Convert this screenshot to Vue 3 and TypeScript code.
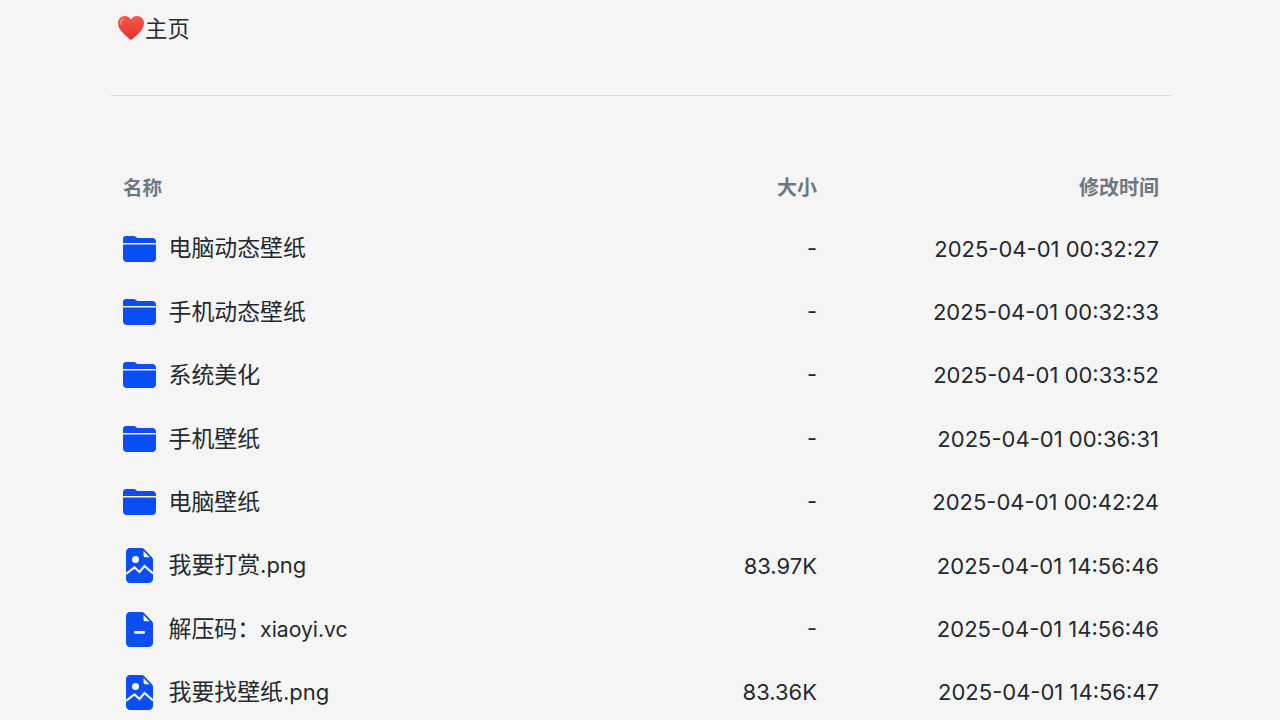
<script setup lang="ts">
interface Row {
  name: string
  ext?: string
  size: string
  time: string
  type: 'folder' | 'image' | 'file'
}

const rows: Row[] = [
  { name: '电脑动态壁纸', size: '-', time: '2025-04-01 00:32:27', type: 'folder' },
  { name: '手机动态壁纸', size: '-', time: '2025-04-01 00:32:33', type: 'folder' },
  { name: '系统美化', size: '-', time: '2025-04-01 00:33:52', type: 'folder' },
  { name: '手机壁纸', size: '-', time: '2025-04-01 00:36:31', type: 'folder' },
  { name: '电脑壁纸', size: '-', time: '2025-04-01 00:42:24', type: 'folder' },
  { name: '我要打赏', ext: '.png', size: '83.97K', time: '2025-04-01 14:56:46', type: 'image' },
  { name: '解压码：', ext: 'xiaoyi.vc', size: '-', time: '2025-04-01 14:56:46', type: 'file' },
  { name: '我要找壁纸', ext: '.png', size: '83.36K', time: '2025-04-01 14:56:47', type: 'image' }
]
</script>

<template>
  <div class="page">
    <div class="crumb">
      <svg class="heart" viewBox="0 0 28 26" width="28" height="26">
        <defs>
          <linearGradient id="heartFill" x1="0" y1="0" x2="0" y2="1">
            <stop offset="0" stop-color="#f4594c" />
            <stop offset="1" stop-color="#e5302a" />
          </linearGradient>
        </defs>
        <path d="M14 25C8 20 1 15 1 8.200 1 4 4.200 1 8 1c2.600 0 4.800 1.300 6 3.500C15.200 2.300 17.400 1 20 1c3.800 0 7 3 7 7.200C27 15 20 20 14 25z" fill="url(#heartFill)" />
        <path d="M6 4.500C4.300 5.300 3.400 7 3.600 9" fill="none" stroke="#f98a80" stroke-width="1.600" stroke-linecap="round" />
      </svg>
      <span class="crumb-text">主页</span>
    </div>
    <div class="divider"></div>
    <div class="table">
      <div class="row head">
        <div>名称</div>
        <div class="right">大小</div>
        <div class="right">修改时间</div>
      </div>
      <div v-for="row in rows" :key="row.name" class="row item">
        <div class="name">
          <span class="icon">
            <svg v-if="row.type === 'folder'" viewBox="0 0 33 26" width="33" height="26">
              <path d="M0 7V3C0 1.300 1.300 0 3 0h7.800c.8 0 1.600.3 2.200.9L14.200 2H29.500C31.500 2 33 3.600 33 5.500V7H0z" fill="#0c4ef5" />
              <path d="M0 8.500h33V22.500C33 24.400 31.400 26 29.500 26H3.500C1.600 26 0 24.400 0 22.500z" fill="#0c4ef5" />
            </svg>
            <svg v-else-if="row.type === 'image'" viewBox="0 0 27 35" width="27" height="35">
              <path d="M4 0h11.500c1 0 2 .4 2.800 1.200l7.500 7.800c.8.800 1.200 1.800 1.200 2.800V31c0 2.200-1.800 4-4 4H4c-2.200 0-4-1.800-4-4V4C0 1.800 1.800 0 4 0z" fill="#0c4ef5" />
              <path d="M17.500 3v4.500c0 1 .8 1.800 1.800 1.800h4.300z" fill="#f5f5f5" />
              <circle cx="9.500" cy="11.500" r="3.500" fill="#f5f5f5" />
              <path d="M0 26 8.500 19.500l5 4.500 5-6L27 25.500" fill="none" stroke="#f5f5f5" stroke-width="2.200" />
            </svg>
            <svg v-else viewBox="0 0 27 35" width="27" height="35">
              <path d="M4 0h11.500c1 0 2 .4 2.800 1.200l7.500 7.800c.8.800 1.200 1.800 1.200 2.800V31c0 2.200-1.800 4-4 4H4c-2.200 0-4-1.800-4-4V4C0 1.800 1.800 0 4 0z" fill="#0c4ef5" />
              <path d="M17.500 3v4.500c0 1 .8 1.800 1.800 1.800h4.300z" fill="#f5f5f5" />
              <rect x="8" y="19" width="11" height="2.800" rx="1" fill="#f5f5f5" />
            </svg>
          </span>
          <span class="label">{{ row.name }}<span v-if="row.ext" class="ext" :class="{ tight: row.type === 'file' }">{{ row.ext }}</span></span>
        </div>
        <div class="right latin">{{ row.size }}</div>
        <div class="right latin">{{ row.time }}</div>
      </div>
    </div>
  </div>
</template>

<style>
html,
body {
  background: #f5f5f5;
  overflow: hidden;
}
</style>

<style scoped>
.page {
  width: 1060px;
  margin-left: 111px;
  font-family: Inter, "Noto Sans CJK SC", sans-serif;
  color: #24292e;
}

.crumb {
  display: flex;
  align-items: center;
  height: 56px;
  padding-left: 6px;
  font-size: 22.400px;
  color: #2b2f33;
}

.crumb-text {
  padding-bottom: 3px;
}

.divider {
  margin-top: 39px;
  border-top: 1px solid #d9dadc;
}

.table {
  margin-top: 59px;
  padding: 0 12px;
}

.row {
  display: grid;
  grid-template-columns: 1fr 200px 342px;
  align-items: center;
}

.head {
  height: 62px;
  font-size: 20px;
  font-weight: 600;
  color: #6e7781;
}

.head > div:first-child {
  font-size: 19.500px;
}

.item {
  height: 63.400px;
  font-size: 22.900px;
}

.right {
  text-align: right;
}

.latin {
  font-size: 22px;
  font-feature-settings: "case";
}

.name {
  display: flex;
  align-items: center;
}

.label {
  padding-bottom: 4.500px;
}

.ext {
  font-size: 22px;
}

.ext.tight {
  font-size: 21.200px;
}

.icon {
  display: flex;
  justify-content: center;
  width: 33px;
  margin-right: 12.500px;
}
</style>
